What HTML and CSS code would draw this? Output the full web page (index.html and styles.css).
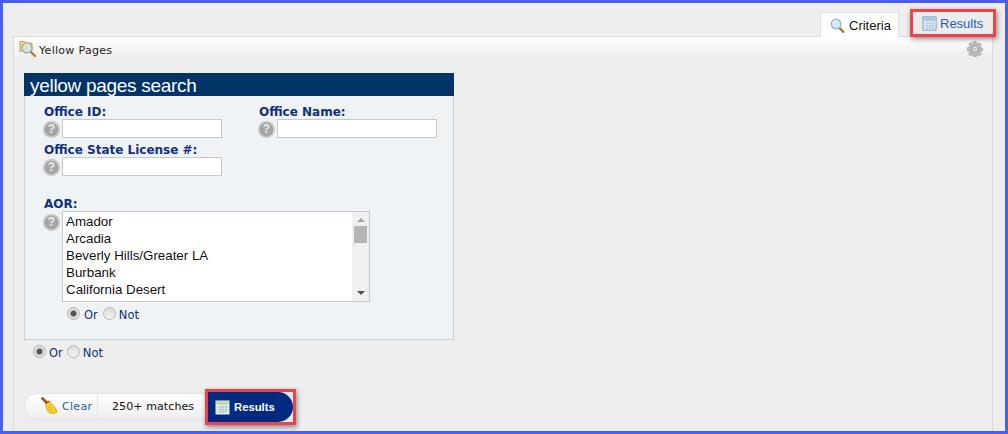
FILE: index.html

```html
<!DOCTYPE html>
<html lang="en">
<head>
    <meta charset="UTF-8">
    <meta name="viewport" content="width=device-width, initial-scale=1.0">
    <title>Yellow Pages</title>
    <link rel="stylesheet" href="styles.css">
</head>
<body>
    <div class="page">
        <nav class="tabs">
            <a class="tab tab-active">
                <svg class="tab-icon" viewBox="0 0 16 16">
                    <path d="M10 10.5l4.2 4.2" stroke="#b9772f" stroke-width="2.6" stroke-linecap="round"/>
                    <circle cx="6.5" cy="6.5" r="5.2" fill="#cfe6f7" stroke="#8fb3cf" stroke-width="1.3"/>
                    <path d="M3.6 6a3 3 0 0 1 2.6-2.6" stroke="#fff" stroke-width="1.2" fill="none"/>
                </svg>
                Criteria
            </a>
            <a class="tab tab-marked">
                <svg class="tab-icon" viewBox="0 0 16 16">
                    <rect x="1" y="1" width="14" height="14" fill="#eef5fb" stroke="#6f97c4"/>
                    <rect x="1.500" y="1.500" width="13" height="3.500" fill="#a9c6e4"/>
                    <path d="M2 7.500h12M2 10h12M2 12.500h12M5.500 5v9M8.500 5v9M11.500 5v9" stroke="#a3bcc9" stroke-width="0.8"/>
                </svg>
                Results
            </a>
        </nav>

        <section class="panel">
            <header class="panel-head">
                <div class="panel-title">
                    <svg class="panel-icon" viewBox="0 0 18 18">
                        <path d="M1 12V1.500h5l1 1.500h6v8H1z" fill="#f3d68a" stroke="#cba24e"/>
                        <path d="M11 11l5 5" stroke="#bb7a30" stroke-width="2.4" stroke-linecap="round"/>
                        <circle cx="8" cy="8" r="5" fill="#d5e6ee" stroke="#8fa9bb" stroke-width="1.2"/>
                        <circle cx="8" cy="8" r="2.400" fill="#e6e3a8"/>
                    </svg>
                    <span class="panel-name">Yellow Pages</span>
                </div>
                <svg class="gear" viewBox="0 0 16 16">
                    <path d="M6.800.5h2.400l.4 2 1.400.6 1.700-1.100 1.700 1.700-1.100 1.700.6 1.400 2 .4v2.400l-2 .4-.6 1.400 1.100 1.700-1.700 1.700-1.700-1.100-1.400.6-.4 2H6.800l-.4-2-1.400-.6-1.700 1.100-1.700-1.700 1.100-1.700-.6-1.400-2-.4V6.800l2-.4.6-1.400L2 3.300 3.700 1.600l1.700 1.100 1.400-.6z" fill="#bdbdbd" stroke="#969696" stroke-width="0.6"/>
                    <circle cx="8" cy="8" r="3.200" fill="#e8e8e8" stroke="#939393"/>
                    <circle cx="8" cy="8" r="1.300" fill="#bdbdbd"/>
                </svg>
            </header>

            <div class="panel-body">
                <div class="search-box">
                    <h2 class="search-title">yellow pages search</h2>
                    <div class="search-form">
                        <div class="field-row">
                            <div class="field">
                                <label class="field-label">Office ID:</label>
                                <div class="field-input">
                                    <span class="help">?</span>
                                    <input type="text" class="text-input">
                                </div>
                            </div>
                            <div class="field">
                                <label class="field-label">Office Name:</label>
                                <div class="field-input">
                                    <span class="help">?</span>
                                    <input type="text" class="text-input">
                                </div>
                            </div>
                        </div>
                        <div class="field">
                            <label class="field-label">Office State License #:</label>
                            <div class="field-input">
                                <span class="help">?</span>
                                <input type="text" class="text-input">
                            </div>
                        </div>
                        <div class="field field-aor">
                            <label class="field-label">AOR:</label>
                            <div class="field-input field-input-top">
                                <span class="help">?</span>
                                <div class="listbox">
                                    <ul class="listbox-items">
                                        <li>Amador</li>
                                        <li>Arcadia</li>
                                        <li>Beverly Hills/Greater LA</li>
                                        <li>Burbank</li>
                                        <li>California Desert</li>
                                    </ul>
                                    <div class="scrollbar">
                                        <span class="arrow arrow-up"></span>
                                        <span class="thumb"></span>
                                        <span class="arrow arrow-down"></span>
                                    </div>
                                </div>
                            </div>
                            <div class="radios radios-inner">
                                <input type="radio" name="aor-mode" checked><span>Or</span>
                                <input type="radio" name="aor-mode"><span>Not</span>
                            </div>
                        </div>
                    </div>
                </div>

                <div class="radios radios-outer">
                    <input type="radio" name="mode" checked><span>Or</span>
                    <input type="radio" name="mode"><span>Not</span>
                </div>

                <div class="action-bar">
                    <a class="clear-btn">
                        <svg class="broom" viewBox="0 0 18 18">
                            <path d="M1.500 1.500l4.500 4.500" stroke="#9a5a1c" stroke-width="2.800" stroke-linecap="round"/>
                            <path d="M5 6.500L8.500 4.500l6 6.500c.8 1.500 1.200 3 1.200 4.500-2 1.200-5 1.300-7 .5C6 14 4.500 10 5 6.500z" fill="#f1d52c" stroke="#b59a16" stroke-width="0.7"/>
                            <path d="M4.500 6.300l4-2.200" stroke="#c8402a" stroke-width="1.400"/>
                            <path d="M8.500 8l3.500 7M7 9.500l2.500 5.500" stroke="#c9a91a" stroke-width="0.6"/>
                        </svg>
                        Clear
                    </a>
                    <span class="match-count">250+ matches</span>
                    <a class="results-btn">
                        <span class="results-pill">
                            <svg class="tab-icon" viewBox="0 0 16 16">
                                <rect x="1" y="1" width="14" height="14" fill="#f2f7f2" stroke="#cfe0ea"/>
                                <rect x="1.500" y="1.500" width="13" height="3.500" fill="#bcd8a8"/>
                                <path d="M2 7.500h12M2 10h12M2 12.500h12M5.500 5v9M8.500 5v9M11.500 5v9" stroke="#9cb6c6" stroke-width="0.8"/>
                            </svg>
                            Results
                        </span>
                    </a>
                </div>
            </div>
        </section>
    </div>
</body>
</html>
```

FILE: styles.css

```css
:root {
    --frame-blue: #4a5ff0;
    --page-bg: #eeeeee;
    --navy: #003366;
    --label-blue: #0f2f7f;
    --link-blue: #2a5db0;
    --marker-red: #f2404a;
}

* {
    box-sizing: border-box;
}

html, body {
    margin: 0;
    padding: 0;
}

body {
    font-family: "Liberation Sans", Arial, sans-serif;
    background-color: var(--page-bg);
}

.page {
    width: 1008px;
    height: 434px;
    border: 3px solid var(--frame-blue);
    background-color: var(--page-bg);
    display: flex;
    flex-direction: column;
    overflow: hidden;
}

/* tabs */
.tabs {
    display: flex;
    justify-content: flex-end;
    align-items: flex-end;
    height: 33px;
    padding-right: 9px;
    gap: 11px;
    flex-shrink: 0;
    position: relative;
    z-index: 1;
}

.tab {
    display: flex;
    align-items: center;
    gap: 3px;
    font-size: 13px;
    color: #111;
}

.tab-active {
    width: 79px;
    height: 25px;
    margin-bottom: -1px;
    padding-left: 9px;
    background-color: #fff;
    border: 1px solid #e0e0e0;
    border-bottom: none;
}

.tab-marked {
    width: 86px;
    height: 28px;
    padding-left: 9px;
    margin-bottom: -1px;
    gap: 2px;
    color: var(--link-blue);
    border: 3px solid var(--marker-red);
    box-shadow: 1px 2px 5px rgba(0,0,0,0.45);
    background-color: #ececec;
}

.tab-icon {
    width: 15px;
    height: 15px;
    flex-shrink: 0;
    margin-right: 1px;
}

/* main panel */
.panel {
    flex-grow: 1;
    margin: 0 12px 0 10px;
    border: 1px solid #dcdcdc;
    border-bottom: none;
    display: flex;
    flex-direction: column;
}

.panel-head {
    height: 23px;
    display: flex;
    justify-content: space-between;
    align-items: center;
    padding: 0 9px 0 5px;
    background: linear-gradient(to bottom, #ffffff, #ececec);
    flex-shrink: 0;
}

.panel-title {
    display: flex;
    align-items: center;
    gap: 2px;
    font-family: "DejaVu Sans", Verdana, sans-serif;
    font-size: 11px;
    letter-spacing: 0.3px;
    color: #222;
}

.panel-name {
    padding-top: 3px;
}

.panel-icon {
    width: 18px;
    height: 18px;
}

.gear {
    width: 16px;
    height: 16px;
}

.panel-body {
    padding: 13px 10px 0;
}

/* search box */
.search-box {
    width: 430px;
    height: 267px;
    background-color: #f0f3f6;
    border: 1px solid #c3d0de;
    border-top: none;
}

.search-title {
    margin: 0 -1px;
    height: 23px;
    padding-left: 6px;
    background-color: var(--navy);
    color: #fff;
    font-size: 19px;
    font-weight: normal;
    letter-spacing: -0.3px;
    line-height: 26px;
}

.search-form {
    padding: 9px 0 0 19px;
}

.field-row {
    display: flex;
}

.field {
    width: 215px;
    flex-shrink: 0;
    margin-bottom: 5px;
}

.field-label {
    display: block;
    font-family: "DejaVu Sans", Verdana, sans-serif;
    font-size: 12px;
    font-weight: bold;
    line-height: 14px;
    color: var(--label-blue);
}

.field-input {
    display: flex;
    align-items: flex-end;
    gap: 2px;
    margin-left: -1px;
}

.field-input-top {
    align-items: flex-start;
}

.field-input-top .help {
    margin-top: 3px;
}

.help {
    width: 17px;
    height: 17px;
    flex-shrink: 0;
    border-radius: 50%;
    background-color: #a6a6a6;
    border: 2px solid #c4c4c4;
    box-shadow: inset 0 0 0 1px #9a9a9a;
    color: #eee;
    font-size: 12px;
    font-weight: bold;
    line-height: 13px;
    text-align: center;
}

.text-input {
    width: 160px;
    height: 19px;
    padding: 0 3px;
    border: 1px solid #c8c8c8;
    background-color: #fff;
}

.field-aor {
    width: auto;
    margin-top: 21px;
}

.listbox {
    display: flex;
    width: 308px;
    height: 91px;
    background-color: #fff;
    border: 1px solid #c4c8cc;
}

.listbox-items {
    flex-grow: 1;
    margin: 0;
    padding: 1px 0 0 3px;
    list-style: none;
    font-size: 13.33px;
    line-height: 17px;
    color: #111;
}

.scrollbar {
    width: 17px;
    background-color: #f0f0f0;
    display: flex;
    flex-direction: column;
    align-items: center;
}

.arrow {
    width: 0;
    height: 0;
    border-left: 4px solid transparent;
    border-right: 4px solid transparent;
}

.arrow-up {
    margin-top: 6px;
    border-bottom: 4px solid #a3a3a3;
}

.thumb {
    width: 13px;
    height: 17px;
    margin-top: 4px;
    background-color: #b5b5b5;
}

.arrow-down {
    margin-top: auto;
    margin-bottom: 6px;
    border-top: 4px solid #505050;
}

/* or / not radios */
.radios {
    display: flex;
    align-items: center;
    font-family: "DejaVu Sans", Verdana, sans-serif;
    font-size: 11.5px;
    line-height: 14px;
    color: var(--label-blue);
}

.radios input {
    appearance: none;
    width: 13px;
    height: 13px;
    margin: 0 4px 3px 0;
    border: 1px solid #b5b5b5;
    border-radius: 50%;
    background: linear-gradient(to bottom, #dcdcdc, #f5f5f5);
}

.radios input:checked {
    background: radial-gradient(circle, #555 0, #555 2.500px, #dedede 3.500px);
}

.radios span {
    margin-right: 5px;
}

.radios-inner {
    margin: 5px 0 0 23px;
}

.radios-inner input:last-of-type {
    margin-right: 3px;
}

.radios-outer {
    margin: 5px 0 0 9px;
}

.radios-outer input {
    margin-right: 3px;
}

.radios-outer span {
    margin-right: 4px;
}

/* bottom bar */
.action-bar {
    display: flex;
    align-items: center;
    margin-top: 28px;
    height: 36px;
}

.clear-btn {
    display: flex;
    align-items: center;
    height: 27px;
    width: 74px;
    margin-bottom: 2px;
    padding-left: 16px;
    gap: 3px;
    border: 1px solid #e2e2e2;
    border-radius: 14px 0 0 14px;
    background: linear-gradient(to bottom, #ffffff, #eeeeee);
    font-family: "DejaVu Sans", Verdana, sans-serif;
    font-size: 11px;
    letter-spacing: 0.3px;
    color: var(--link-blue);
}

.broom {
    width: 18px;
    height: 18px;
    flex-shrink: 0;
}

.match-count {
    display: flex;
    align-items: center;
    height: 27px;
    width: 107px;
    margin-bottom: 2px;
    padding-left: 14px;
    background: linear-gradient(to bottom, #ffffff, #eeeeee);
    border-top: 1px solid #e2e2e2;
    border-bottom: 1px solid #e2e2e2;
    font-family: "DejaVu Sans", Verdana, sans-serif;
    font-size: 11px;
    letter-spacing: 0.1px;
    color: #111;
}

.results-btn {
    display: block;
    width: 91px;
    height: 36px;
    border: 3px solid var(--marker-red);
    box-shadow: 1px 2px 5px rgba(0,0,0,0.45);
    background-color: #e8e8e8;
}

.results-pill {
    display: flex;
    align-items: center;
    gap: 3px;
    height: 100%;
    padding-left: 7px;
    background-color: #002a80;
    border-radius: 0 16px 16px 0;
    color: #fff;
    font-size: 11.3px;
    font-weight: bold;
}
```
